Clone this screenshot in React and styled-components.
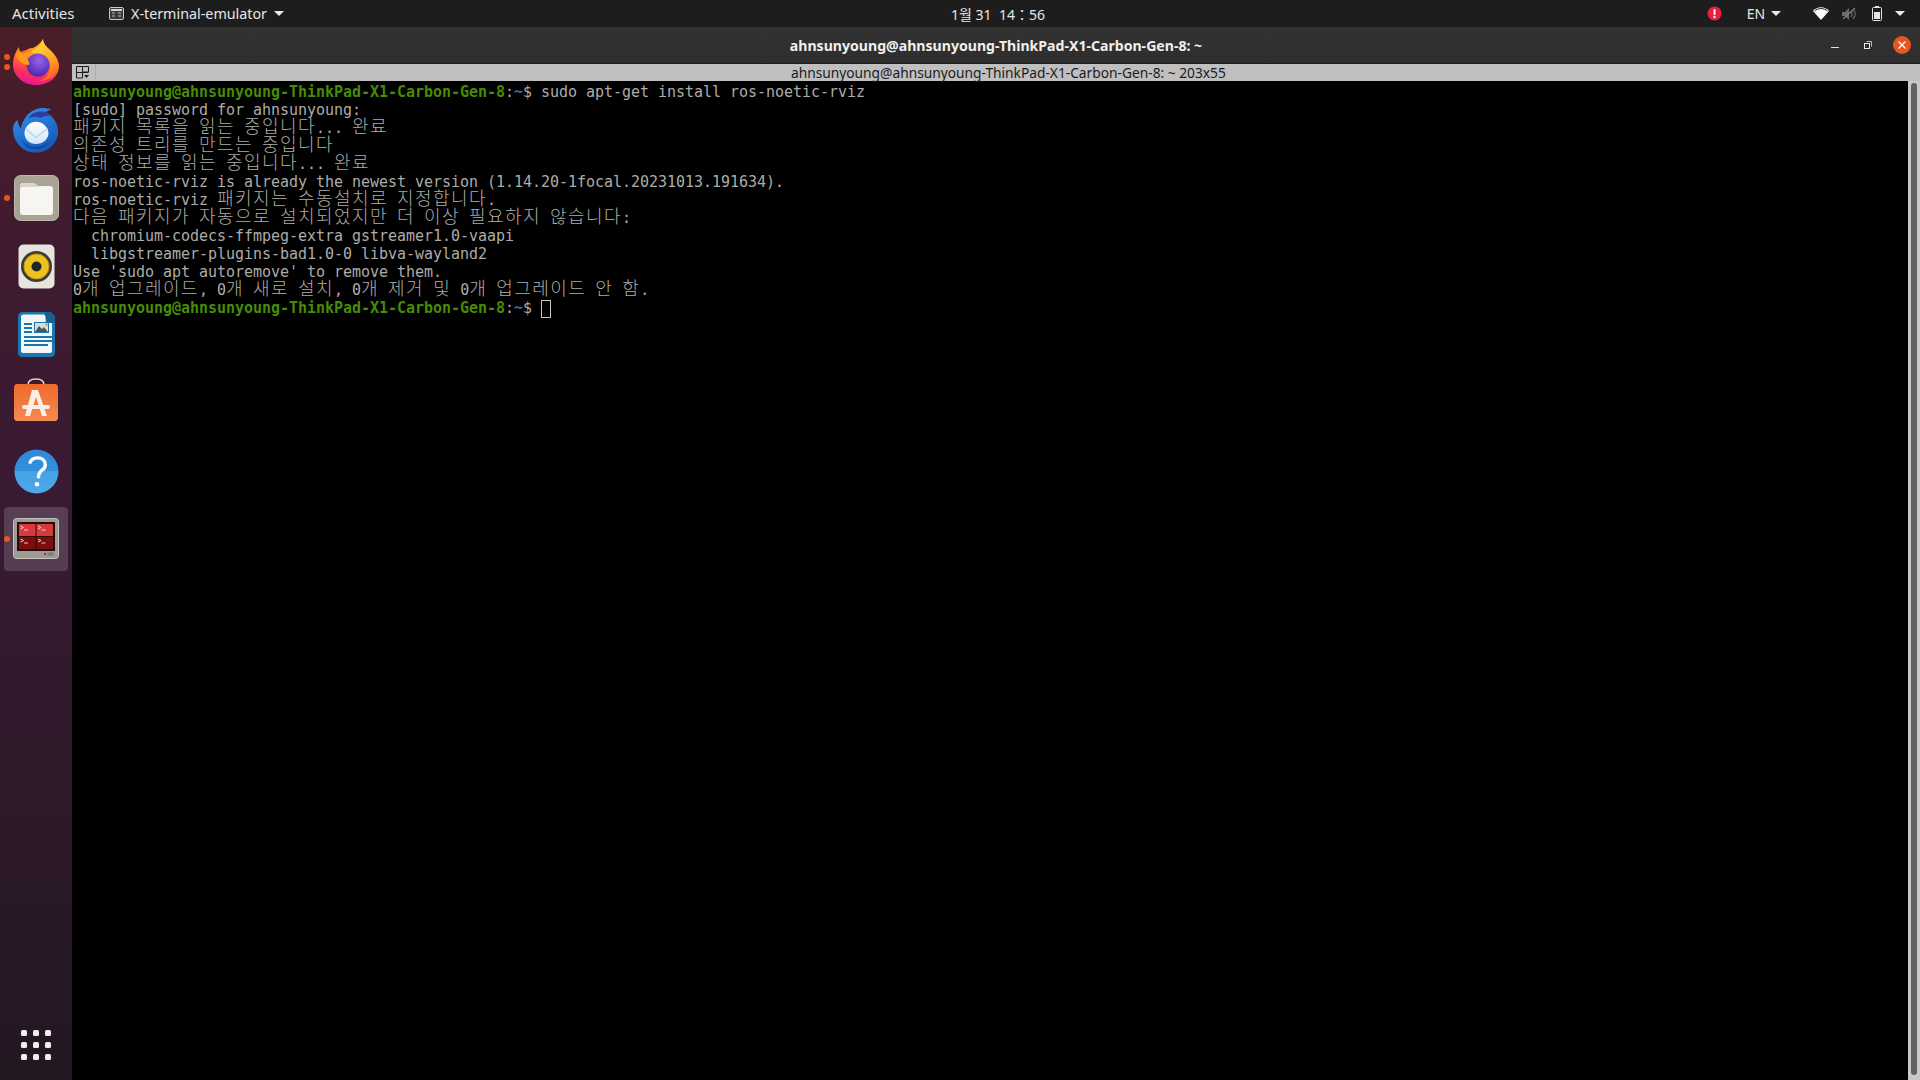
import React from "react";
import styled, { createGlobalStyle } from "styled-components";

const Global = createGlobalStyle`
  html, body { margin: 0; padding: 0; width: 1920px; height: 1080px; overflow: hidden; background: #000; }
  #root { width: 1920px; height: 1080px; }
`;

const UI = `"Noto Sans", "Open Sans", "Noto Sans CJK KR", sans-serif`;

const Screen = styled.div`
  width: 1920px; height: 1080px; display: flex; flex-direction: column; overflow: hidden;
`;
const TopBar = styled.header`
  height: 27px; flex: none; background: #1d1d1d; color: #e6e6e4; display: flex; align-items: center;
  font: 14px/27px ${UI}; position: relative;
`;
const Activities = styled.span`margin-left: 12px; width: 97px; flex: none; font-size: 15px;`;
const AppMenu = styled.div`display: flex; align-items: center; gap: 7px; width: 834px; flex: none; font-size: 14.3px;`;
const Clock = styled.span`width: 110px; flex: none; text-align: center; font-size: 14px; white-space: pre; padding-top: 2px;`;
const Tray = styled.div`display: flex; align-items: center; margin-left: auto; height: 27px;`;
const TraySlot = styled.span`display: flex; align-items: center; justify-content: center; width: ${p => p.$w}px; margin-left: ${p => p.$ml || 0}px; font-size: 14px;`;
const Caret = styled.span`
  display: inline-block; width: 0; height: 0; border-left: 5px solid transparent; border-right: 5px solid transparent;
  border-top: 5px solid #ebebe9; margin-left: ${p => p.$ml || 0}px;
`;
const Body = styled.div`flex: 1; display: flex; min-height: 0;`;
const Dock = styled.nav`
  width: 72px; flex: none; display: flex; flex-direction: column; align-items: center; position: relative;
  padding-top: 3px; box-sizing: border-box;
  background: linear-gradient(180deg, #4b1d27 0%, #3f1b2f 20%, #381a33 45%, #2c1929 75%, #231722 100%);
`;
const DockItem = styled.div`
  width: 64px; height: 64px; margin-bottom: 4.2px; display: flex; align-items: center; justify-content: center;
  border-radius: 4px; position: relative; flex: none;
  background: ${p => (p.$active ? "rgba(255,255,255,.16)" : "transparent")};
`;
const Dots = styled.span`
  position: absolute; left: 0; top: 50%; transform: translateY(-50%); display: flex; flex-direction: column; gap: 4px;
`;
const Dot = styled.i`display: block; width: 6px; height: 6px; border-radius: 50%; background: #e9541f;`;
const AppGrid = styled.div`
  margin-top: auto; margin-bottom: 20px; display: grid; grid-template-columns: repeat(3, 6px); gap: 6px;
`;
const GridDot = styled.i`display: block; width: 6px; height: 6px; border-radius: 1.5px; background: #eeeeea;`;
const Win = styled.main`flex: 1; min-width: 0; display: flex; flex-direction: column;`;
const TitleBar = styled.div`
  height: 37px; flex: none; background: linear-gradient(#333232, #2f2e2e); border-bottom: 1px solid #1f1e1e; box-sizing: border-box;
  display: flex; align-items: center; position: relative; padding-right: 9px;
`;
const Title = styled.div`
  position: absolute; left: 0; right: 0; text-align: center; color: #f0f0ee; font: 700 14.1px/37px ${UI};
`;
const WinButtons = styled.div`margin-left: auto; display: flex; align-items: center; position: relative;`;
const WinBtn = styled.span`width: ${p => p.$w}px; height: 18px; display: flex; align-items: center; justify-content: center;`;
const CloseBtn = styled.span`
  width: 18px; height: 18px; border-radius: 50%; background: #e95420; display: flex; align-items: center; justify-content: center;
`;
const TabBar = styled.div`
  height: 17px; flex: none; background: #c0bfbf; display: flex; align-items: center; position: relative;
  color: #1b1b1b; font: 13.75px/17px ${UI};
`;
const TabIcon = styled.span`
  width: 24px; height: 17px; display: flex; align-items: center; padding-left: 4px; border-right: 1px solid #aeadad; box-sizing: border-box;
`;
const TabText = styled.span`margin-left: 695px; white-space: pre;`;
const TermArea = styled.div`flex: 1; display: flex; min-height: 0; background: #000;`;
const Terminal = styled.pre`
  flex: 1; margin: 0; padding: 2px 0 0 1px; background: #000; color: #acaca8;
  font: 15px/18px "DejaVu Sans Mono", "Liberation Mono", monospace; letter-spacing: -0.03px;
`;
const Row = styled.div`
  height: 18px; line-height: 18px; white-space: pre; overflow: visible;
  margin: ${p => (p.$cjk ? "-3px 0 3px" : "0")};
`;
const Prompt = styled.span`color: #478c06; font-weight: 700;`;
const Colon = styled.span`color: #acaca8;`;
const PathPart = styled.span`color: #3b6ba8; font-weight: 700;`;
const Hangul = styled.span`
  font-family: "Noto Sans CJK KR", sans-serif; font-size: 18px; letter-spacing: 1.44px; font-weight: 300; color: #acaca8;
`;
const Cursor = styled.span`
  display: inline-block; width: 10px; height: 18px; border: 1px solid #c8c8c4; box-sizing: border-box; vertical-align: -5px;
`;
const ScrollTrack = styled.div`width: 12px; flex: none; background: #c8c8c8; display: flex; justify-content: center; padding: 2px 0 5px; box-sizing: border-box;`;
const ScrollThumb = styled.div`width: 6px; height: 100%; border-radius: 3px; background: #606060;`;

const hangulRe = /([\uac00-\ud7a3]+)/;
const Text = ({ children }) =>
  children.split(hangulRe).map((s, i) => (i % 2 ? <Hangul key={i}>{s}</Hangul> : <React.Fragment key={i}>{s}</React.Fragment>));

const PromptLine = ({ children }) => (
  <Row>
    <Prompt>ahnsunyoung@ahnsunyoung-ThinkPad-X1-Carbon-Gen-8</Prompt>
    <Colon>:</Colon>
    <PathPart>~</PathPart>
    <Colon>$ </Colon>
    {children}
  </Row>
);

const Firefox = () => (
  <svg width="46" height="46" viewBox="0 0 46 46">
    <defs>
      <linearGradient id="ff1" x1="0.6" y1="0" x2="0.35" y2="1"><stop offset="0" stopColor="#ffc02a" /><stop offset=".45" stopColor="#ff7a26" /><stop offset=".75" stopColor="#fb2f5a" /><stop offset="1" stopColor="#e8149a" /></linearGradient>
      <linearGradient id="ff2" x1="0.3" y1="0" x2="0.8" y2="1"><stop offset="0" stopColor="#ffe23a" /><stop offset=".55" stopColor="#ffa51f" /><stop offset="1" stopColor="#ff5a2a" /></linearGradient>
      <radialGradient id="ff3" cx=".55" cy=".3" r=".75"><stop offset="0" stopColor="#9a62e8" /><stop offset="1" stopColor="#4623ad" /></radialGradient>
    </defs>
    <path d="M30 0C30 5 34 8 38 12C43 17 46 22 46 27C46 38 36 46 23 46C10 46 0 37 0 25C0 19 2 13 6 8C6 11 7 13 9 14C12 11 16 9 20 9C24 7 28 4 30 0Z" fill="url(#ff1)" />
    <circle cx="25" cy="26" r="11.500" fill="url(#ff3)" />
    <path d="M30 0C30 5 34 8 38 12C44 18 46 23 45 29C43 37 35 42 26 42C33 40 38 34 37.500 26C37 20 32 15 26 14.500C22 14 18 15 16 17C16 13 20 11 24 9C27 7 29 4 30 0Z" fill="url(#ff2)" />
    <path d="M3 16C8 12 15 11 21 14C19 16 17 17 14 18C14 21 17 22 16 26C10 26 5 22 3 16Z" fill="#ff9a1f" />
    <path d="M6 9C6 12 7 14 10 15C12 13 15 12 18 12C13 10 9 12 7 13C6.500 12 6.200 10.500 6 9Z" fill="#ff6a24" />
  </svg>
);
const Thunderbird = () => (
  <svg width="48" height="47" viewBox="0 0 50 48">
    <defs>
      <linearGradient id="tb1" x1="0.2" y1="0" x2="0.7" y2="1"><stop offset="0" stopColor="#2f8fe8" /><stop offset="1" stopColor="#1557b8" /></linearGradient>
      <linearGradient id="tb2" x1="0" y1="0" x2="0" y2="1"><stop offset="0" stopColor="#ffffff" /><stop offset="1" stopColor="#cfe4f8" /></linearGradient>
    </defs>
    <path d="M1 22c0-4 2-7 5-9 0 4 2 7 3 9 2-9 8-19 19-21 4-1 9 0 13 1-3 1-5 2-6 3 6 3 13 10 13 20 0 12-10 22-24 22C11 47 1 36 1 22z" fill="url(#tb1)" />
    <path d="M17 11c4-6 12-8 18-6 3 1 5 2 7 4-5-1-9 0-12 2-4-2-9-1-13 0z" fill="#2b3e9f" />
    <path d="M13 27c0-7 6-12 12-12s13 5 13 12c0 6-6 11-13 11S13 33 13 27z" fill="url(#tb2)" />
    <path d="M14 22l11 9 12-9" fill="none" stroke="#b9d6f2" strokeWidth="1.5" />
    <path d="M10 33c4 6 11 9 18 8 5-1 9-3 12-6-4 6-10 9-17 8-6 0-11-4-13-10z" fill="#0f3f96" opacity=".75" />
  </svg>
);
const Files = () => (
  <svg width="45" height="46" viewBox="0 0 45 46">
    <rect x=".5" y=".5" width="44" height="45" rx="6" fill="#a8a392" stroke="#bdb9a9" />
    <path d="M6 11c0-2 1-3 3-3h11l4 3h12c2 0 3 1 3 3v23c0 2-1 3-3 3H9c-2 0-3-1-3-3z" fill="#f6f5f1" />
    <path d="M6 11c0-2 1-3 3-3h11l5 4H9c-2 0-3 1-3 2z" fill="#d8d5ca" />
  </svg>
);
const Rhythmbox = () => (
  <svg width="37" height="45" viewBox="0 0 37 45">
    <rect x=".5" y=".5" width="36" height="44" rx="5" fill="#e7e4db" />
    <circle cx="18.500" cy="22.500" r="15.500" fill="#3d3c3a" />
    <circle cx="18.500" cy="22.500" r="12.500" fill="#ecc21c" />
    <circle cx="18.500" cy="22.500" r="12.500" fill="none" stroke="#c79a10" strokeWidth="1" />
    <circle cx="18.500" cy="22.500" r="5" fill="#262523" />
  </svg>
);
const Writer = () => (
  <svg width="37" height="45" viewBox="0 0 37 45">
    <path d="M4 0h24l9 9v32c0 2-2 4-4 4H4c-2 0-4-2-4-4V4c0-2 2-4 4-4z" fill="#1b76ad" />
    <path d="M5 2.500h21l8 8V39c0 1-1 2-2 2H5c-1 0-2-1-2-2V4.500c0-1 1-2 2-2z" fill="#f3f5f6" />
    <path d="M27 0h6l4 4v7h-9z" fill="#1a5f8e" />
    <g fill="#1b76ad">
      <rect x="6" y="11" width="8" height="2" /><rect x="6" y="15" width="8" height="2" /><rect x="6" y="19" width="8" height="2" />
      <rect x="6" y="24" width="28" height="2" /><rect x="6" y="28" width="28" height="2" /><rect x="6" y="32" width="24" height="2" />
    </g>
    <rect x="16.500" y="10.500" width="14" height="10" fill="#cfe0ea" stroke="#1b76ad" />
    <path d="M17 20l4-6 3 3 2-2 4 5z" fill="#55544f" />
    <rect x="27" y="11" width="3" height="3" fill="#f2b61f" />
  </svg>
);
const AppStore = () => (
  <svg width="46" height="50" viewBox="0 0 46 50">
    <defs><linearGradient id="as1" x1="0" y1="0" x2="0" y2="1"><stop offset="0" stopColor="#ef6a2b" /><stop offset="1" stopColor="#f58a52" /></linearGradient></defs>
    <path d="M15 7c0-4 3-6 8-6s8 2 8 6" fill="none" stroke="#e8d9c3" strokeWidth="1.600" />
    <rect x="1" y="6" width="44" height="37" rx="3.500" fill="url(#as1)" />
    <path d="M19 12h6l9 26h-5l-6-19-6 19h-5z" fill="#fbeee6" />
    <rect x="9" y="27" width="28" height="4" rx="2" fill="#fbeee6" />
  </svg>
);
const Help = () => (
  <svg width="45" height="45" viewBox="0 0 46 46">
    <defs><linearGradient id="hp" x1="0" y1="0" x2="0" y2="1"><stop offset="0" stopColor="#2f8ad8" /><stop offset=".5" stopColor="#3290dc" /><stop offset=".5" stopColor="#46a2e6" /><stop offset="1" stopColor="#4ea8ea" /></linearGradient></defs>
    <circle cx="23" cy="23" r="22.500" fill="url(#hp)" />
    <path d="M16 15c1-4 4-6 8-6 5 0 8 3 8 7 0 3-2 5-4 6-2 2-3 3-3 6v2" fill="none" stroke="#fff" strokeWidth="3.400" />
    <circle cx="23.500" cy="36" r="2.300" fill="#fff" />
  </svg>
);
const TermApp = () => (
  <svg width="46" height="42" viewBox="0 0 46 42">
    <rect x=".5" y=".5" width="45" height="40" rx="3" fill="#9c9b97" stroke="#c4c3be" />
    <rect x="4" y="4" width="38" height="29" fill="#2d0909" />
    <rect x="6" y="6" width="16.500" height="12" fill="#d63a3a" />
    <rect x="23.500" y="6" width="16.500" height="12" fill="#d63a3a" />
    <rect x="6" y="19" width="16.500" height="12" fill="#7c0d0d" />
    <rect x="23.500" y="19" width="16.500" height="12" fill="#7c0d0d" />
    <g fill="none" stroke="#f4dede" strokeWidth=".9">
      <path d="M7.500 8l3 1.500-3 1.500M25 8l3 1.500-3 1.500M7.500 21l3 1.500-3 1.500M25 21l3 1.500-3 1.500" />
      <path d="M11 12h4M28.500 12h4M11 25h4M28.500 25h4" />
    </g>
    <rect x="31" y="35" width="2" height="2" fill="#e01818" />
    <rect x="34.500" y="34.500" width="6" height="3" fill="#7a7975" />
  </svg>
);

const apps = [
  { id: "ff", Icon: Firefox, dots: 2 },
  { id: "tb", Icon: Thunderbird, dots: 0 },
  { id: "fl", Icon: Files, dots: 1 },
  { id: "rb", Icon: Rhythmbox, dots: 0 },
  { id: "wr", Icon: Writer, dots: 0 },
  { id: "as", Icon: AppStore, dots: 0 },
  { id: "hp", Icon: Help, dots: 0 },
  { id: "tm", Icon: TermApp, dots: 1, active: true },
];

export default function App() {
  return (
    <Screen>
      <Global />
      <TopBar>
        <Activities>Activities</Activities>
        <AppMenu>
          <svg width="15" height="13" viewBox="0 0 15 13">
            <rect x=".5" y=".5" width="14" height="12" rx="1.500" fill="#3a3a3a" stroke="#c9c9c7" />
            <rect x="2" y="2" width="11" height="2" fill="#d8d8d6" />
            <path d="M3 6h3M9 6h3M3 9h3M9 9h3" stroke="#bdbdbb" />
          </svg>
          <span>X-terminal-emulator</span>
          <Caret />
        </AppMenu>
        <Clock>1월 31  14：56</Clock>
        <Tray>
          <TraySlot $w={16}>
            <svg width="15" height="15" viewBox="0 0 15 15">
              <circle cx="7.500" cy="7.500" r="7" fill="#e8203f" />
              <rect x="6.500" y="3" width="2" height="6" rx="1" fill="#fff" /><circle cx="7.500" cy="11" r="1.200" fill="#fff" />
            </svg>
          </TraySlot>
          <TraySlot $w={20} $ml={24}>EN</TraySlot>
          <Caret $ml={5} />
          <TraySlot $w={16} $ml={32}>
            <svg width="16" height="13" viewBox="0 0 16 13">
              <path d="M8 13L0 4c4-5 12-5 16 0z" fill="#fff" />
              <path d="M8 12L3.500 7.500C6 5.500 10 5.500 12.500 7.500z" fill="#fff" />
              <path d="M1.500 4C5 .8 11 .8 14.500 4" fill="none" stroke="#1d1d1d" strokeWidth="1" />
            </svg>
          </TraySlot>
          <TraySlot $w={16} $ml={12}>
            <svg width="15" height="14" viewBox="0 0 15 14">
              <path d="M0 5h3l4-4v12l-4-4H0z" fill="#6b6b6b" />
              <path d="M9 4c1.500 1.500 1.500 4.500 0 6M11 2c3 3 3 7 0 10" fill="none" stroke="#6b6b6b" strokeWidth="1.200" />
              <path d="M1 12L13 1" stroke="#7d7d7d" strokeWidth="1.200" />
            </svg>
          </TraySlot>
          <TraySlot $w={12} $ml={14}>
            <svg width="10" height="15" viewBox="0 0 10 15">
              <rect x="3" y="0" width="4" height="2" fill="#e6e6e4" />
              <rect x=".5" y="1.500" width="9" height="13" rx="1" fill="none" stroke="#e6e6e4" />
              <rect x="2" y="6" width="6" height="7" fill="#e6e6e4" />
            </svg>
          </TraySlot>
          <Caret $ml={12} />
          <TraySlot $w={15} />
        </Tray>
      </TopBar>
      <Body>
        <Dock>
          {apps.map(({ id, Icon, dots, active }) => (
            <DockItem key={id} $active={active}>
              {dots > 0 && (
                <Dots>
                  {Array.from({ length: dots }, (_, i) => <Dot key={i} />)}
                </Dots>
              )}
              <Icon />
            </DockItem>
          ))}
          <AppGrid>
            {Array.from({ length: 9 }, (_, i) => <GridDot key={i} />)}
          </AppGrid>
        </Dock>
        <Win>
          <TitleBar>
            <Title>ahnsunyoung@ahnsunyoung-ThinkPad-X1-Carbon-Gen-8: ~</Title>
            <WinButtons>
              <WinBtn $w={16}><svg width="8" height="8" viewBox="0 0 8 8"><rect y="6" width="8" height="1" fill="#e0e0de" /></svg></WinBtn>
              <WinBtn $w={50}>
                <svg width="8" height="8" viewBox="0 0 8 8"><path d="M2.500.5h5v5" fill="none" stroke="#bdbdbb" /><rect x=".5" y="2.500" width="5" height="5" fill="none" stroke="#ecece9" /></svg>
              </WinBtn>
              <CloseBtn>
                <svg width="8" height="8" viewBox="0 0 8 8"><path d="M.5.5l7 7M7.500.5l-7 7" stroke="#fff" strokeWidth="1.300" /></svg>
              </CloseBtn>
            </WinButtons>
          </TitleBar>
          <TabBar>
            <TabIcon>
              <svg width="14" height="13" viewBox="0 0 14 13">
                <path d="M.5.500h12v5.500h-6v6h-6zM6.500.500v6M.5 6.500h6M6.500 6.500h6" fill="none" stroke="#1a1a1a" />
                <path d="M8 9h5l-2.500 3z" fill="#1a1a1a" />
              </svg>
            </TabIcon>
            <TabText>ahnsunyoung@ahnsunyoung-ThinkPad-X1-Carbon-Gen-8: ~ 203x55</TabText>
          </TabBar>
          <TermArea>
            <Terminal>
              <PromptLine>sudo apt-get install ros-noetic-rviz</PromptLine>
              <Row>[sudo] password for ahnsunyoung:</Row>
              <Row $cjk><Text>패키지 목록을 읽는 중입니다... 완료</Text></Row>
              <Row $cjk><Text>의존성 트리를 만드는 중입니다</Text></Row>
              <Row $cjk><Text>상태 정보를 읽는 중입니다... 완료</Text></Row>
              <Row>ros-noetic-rviz is already the newest version (1.14.20-1focal.20231013.191634).</Row>
              <Row $cjk><Text>ros-noetic-rviz 패키지는 수동설치로 지정합니다.</Text></Row>
              <Row $cjk><Text>다음 패키지가 자동으로 설치되었지만 더 이상 필요하지 않습니다:</Text></Row>
              <Row>  chromium-codecs-ffmpeg-extra gstreamer1.0-vaapi</Row>
              <Row>  libgstreamer-plugins-bad1.0-0 libva-wayland2</Row>
              <Row>Use 'sudo apt autoremove' to remove them.</Row>
              <Row $cjk><Text>0개 업그레이드, 0개 새로 설치, 0개 제거 및 0개 업그레이드 안 함.</Text></Row>
              <PromptLine><Cursor /></PromptLine>
            </Terminal>
            <ScrollTrack><ScrollThumb /></ScrollTrack>
          </TermArea>
        </Win>
      </Body>
    </Screen>
  );
}
